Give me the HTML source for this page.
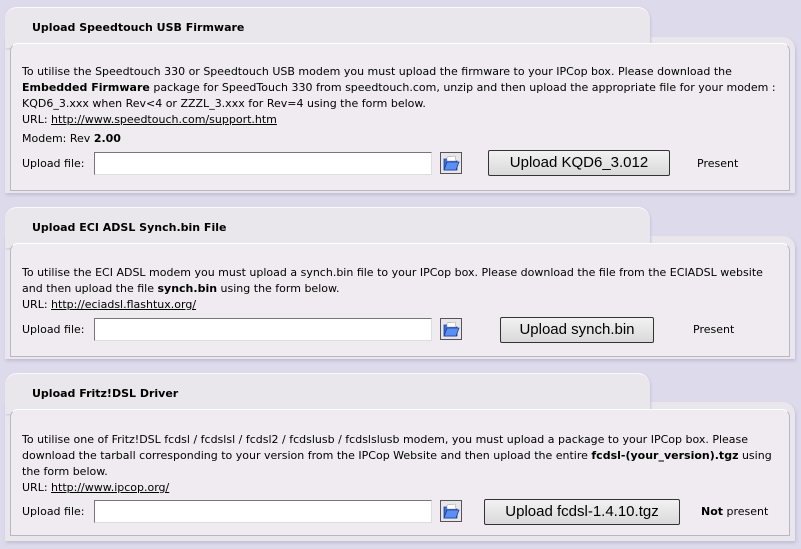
<!DOCTYPE html>
<html><head><style>
body{margin:0;width:801px;height:549px;background:#dcdaeb;font-family:"DejaVu Sans",Verdana,sans-serif;font-size:11px;color:#000;position:relative;overflow:hidden}
.tab{position:absolute;left:5px;width:645px;background:#eae7ec;border-radius:12px 12px 0 0;border-top:1px solid #fbfbfd;box-shadow:1px 1px 2px #c6c4d8}
.tab b{position:absolute;left:27px;top:13px;font-size:11px}
.body{position:absolute;left:5px;width:790px;background:#eae7ec;border-radius:0 12px 0 0;box-shadow:1px 2px 3px #c0bed4}
.inner{position:absolute;left:10px;width:780px;background:#efebf0;border:1px solid #b9b7c2;border-top-color:#fff;border-radius:8px 8px 0 0;box-sizing:border-box}
.t{position:absolute;left:22px;line-height:16px;white-space:nowrap}
a{color:#000;text-decoration:underline}
.inp{position:absolute;left:94px;width:338px;height:23px;background:#fff;border:1px solid #777;border-right-color:#ddd;border-bottom-color:#ddd;box-sizing:border-box}
.ic{position:absolute;left:440px;width:22px;height:22px;border:1px solid #555;box-sizing:border-box;background:#e8e6ea}
.btn{position:absolute;height:26px;border:1px solid #333;box-sizing:border-box;background:linear-gradient(#f2f2f2,#d9d9d9);font-family:"Liberation Sans",Arial,sans-serif;font-size:15px;text-align:center;line-height:24px;border-radius:2px}
.lbl{position:absolute;left:22px}
.st{position:absolute}
</style></head><body>

<!-- panel 1 -->
<div class="body" style="top:37px;height:156px"></div>
<div class="tab" style="top:7px;height:40px"><b>Upload Speedtouch USB Firmware</b></div>
<div class="inner" style="top:43px;height:148px"></div>
<div class="t" style="top:64px">To utilise the Speedtouch 330 or Speedtouch USB modem you must upload the firmware to your IPCop box. Please download the<br><b>Embedded Firmware</b> package for SpeedTouch 330 from speedtouch.com, unzip and then upload the appropriate file for your modem :<br>KQD6_3.xxx when Rev&lt;4 or ZZZL_3.xxx for Rev=4 using the form below.<br>URL: <a>http://www.speedtouch.com/support.htm</a></div>
<div class="t" style="top:131px">Modem: Rev <b>2.00</b></div>
<div class="lbl" style="top:157px">Upload file:</div>
<div class="inp" style="top:152px"></div>
<div class="ic" style="top:152px"><svg width="20" height="20" viewBox="0 0 20 20"><path d="M3 6h5l1 2h7v9H3z" fill="#3a6fd8" stroke="#1a3c9a" stroke-width=".8"/><path d="M6 4l8-1 1 5H6z" fill="#fff" stroke="#999" stroke-width=".5"/><path d="M3 17l3-8h12l-3 8z" fill="#5b8ff0" stroke="#1a3c9a" stroke-width=".8"/></svg></div>
<div class="btn" style="left:488px;width:182px;top:150px">Upload KQD6_3.012</div>
<div class="st" style="left:697px;top:157px">Present</div>

<!-- panel 2 -->
<div class="body" style="top:236px;height:123px"></div>
<div class="tab" style="top:207px;height:40px"><b>Upload ECI ADSL Synch.bin File</b></div>
<div class="inner" style="top:243px;height:114px"></div>
<div class="t" style="top:265px">To utilise the ECI ADSL modem you must upload a synch.bin file to your IPCop box. Please download the file from the ECIADSL website<br>and then upload the file <b>synch.bin</b> using the form below.<br>URL: <a>http://eciadsl.flashtux.org/</a></div>
<div class="lbl" style="top:323px">Upload file:</div>
<div class="inp" style="top:318px"></div>
<div class="ic" style="top:318px"><svg width="20" height="20" viewBox="0 0 20 20"><path d="M3 6h5l1 2h7v9H3z" fill="#3a6fd8" stroke="#1a3c9a" stroke-width=".8"/><path d="M6 4l8-1 1 5H6z" fill="#fff" stroke="#999" stroke-width=".5"/><path d="M3 17l3-8h12l-3 8z" fill="#5b8ff0" stroke="#1a3c9a" stroke-width=".8"/></svg></div>
<div class="btn" style="left:500px;width:154px;top:317px">Upload synch.bin</div>
<div class="st" style="left:693px;top:323px">Present</div>

<!-- panel 3 -->
<div class="body" style="top:402px;height:139px"></div>
<div class="tab" style="top:373px;height:40px"><b>Upload Fritz!DSL Driver</b></div>
<div class="inner" style="top:409px;height:127px"></div>
<div class="t" style="top:432px">To utilise one of Fritz!DSL fcdsl / fcdslsl / fcdsl2 / fcdslusb / fcdslslusb modem, you must upload a package to your IPCop box. Please<br>download the tarball corresponding to your version from the IPCop Website and then upload the entire <b>fcdsl-(your_version).tgz</b> using<br>the form below.<br>URL: <a>http://www.ipcop.org/</a></div>
<div class="lbl" style="top:505px">Upload file:</div>
<div class="inp" style="top:500px"></div>
<div class="ic" style="top:500px"><svg width="20" height="20" viewBox="0 0 20 20"><path d="M3 6h5l1 2h7v9H3z" fill="#3a6fd8" stroke="#1a3c9a" stroke-width=".8"/><path d="M6 4l8-1 1 5H6z" fill="#fff" stroke="#999" stroke-width=".5"/><path d="M3 17l3-8h12l-3 8z" fill="#5b8ff0" stroke="#1a3c9a" stroke-width=".8"/></svg></div>
<div class="btn" style="left:484px;width:196px;top:499px">Upload fcdsl-1.4.10.tgz</div>
<div class="st" style="left:701px;top:505px"><b>Not</b> present</div>

</body></html>
